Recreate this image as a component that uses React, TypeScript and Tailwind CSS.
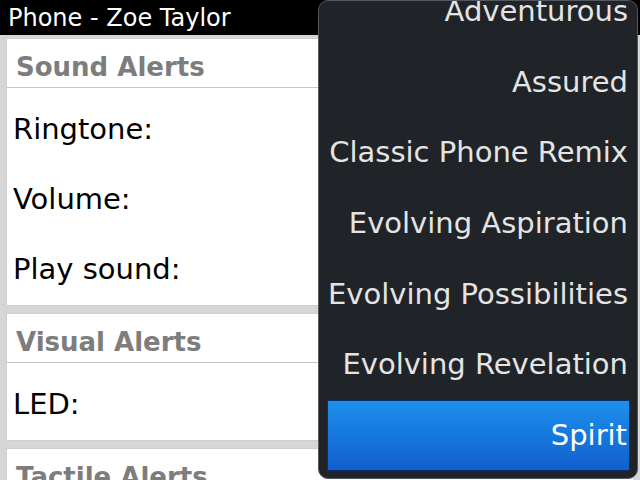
const FONT = "font-['DejaVu_Sans',sans-serif]";

const TONES = [
  'Adventurous',
  'Assured',
  'Classic Phone Remix',
  'Evolving Aspiration',
  'Evolving Possibilities',
  'Evolving Revelation',
  'Spirit',
];

function Card({ title, rows }: { title: string; rows: string[] }) {
  return (
    <div className="ml-[6px] mr-[6px] bg-white border border-[#cfcfcf] shrink-0">
      <div className="h-[49px] flex items-center pt-[7px] px-[9px] border-b border-[#c6c6c6]">
        <span className="text-[26px] font-bold text-[#7d7d7d] leading-none whitespace-nowrap">{title}</span>
      </div>
      <div className="pt-[5px] pb-[2px]">
        {rows.map((r) => (
          <div key={r} className="h-[70px] flex items-center pt-[2px] px-[6px]">
            <span className="text-[29px] text-black leading-none">{r}</span>
          </div>
        ))}
      </div>
    </div>
  );
}

export default function App() {
  const selected = 'Spirit';

  return (
    <div className={`relative w-[640px] h-[480px] overflow-hidden bg-[#d6d6d6] ${FONT}`}>
      {/* Title bar */}
      <div className="h-[35px] bg-black flex items-center px-[8px]">
        <span className="text-[24px] text-white leading-none">Phone - Zoe Taylor</span>
      </div>

      <div className="flex flex-col gap-[7px] pt-[3px]">
        <Card title="Sound Alerts" rows={['Ringtone:', 'Volume:', 'Play sound:']} />
        <Card title="Visual Alerts" rows={['LED:']} />
        <Card title="Tactile Alerts" rows={['Vibrate:']} />
      </div>

      {/* Ringtone picker */}
      <div className="absolute left-[318px] top-0 w-[320px] h-[479px] rounded-[10px] bg-[#202328] border border-[#55585e] overflow-hidden">
        <div className="-mt-[25px] flex flex-col">
          {TONES.map((t) => {
            const on = t === selected;
            return (
              <div
                key={t}
                className={`h-[70.7px] ml-[8px] mr-[7px] pr-[2px] flex items-center justify-end ${
                  on ? 'bg-gradient-to-b from-[#1e90ec] to-[#135fcf] border border-[#0c2f66]' : ''
                }`}
              >
                <span className={`text-[29px] leading-none whitespace-nowrap ${on ? 'text-white' : 'text-[#e4e4e4]'}`}>
                  {t}
                </span>
              </div>
            );
          })}
        </div>
      </div>
    </div>
  );
}
